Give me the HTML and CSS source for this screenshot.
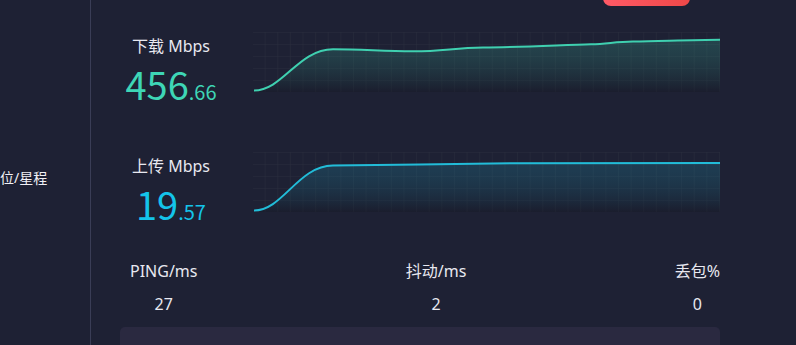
FILE: index.html
```html
<!DOCTYPE html>
<html lang="zh-CN">
  <head>
    <meta charset="UTF-8" />
    <meta name="viewport" content="width=device-width, initial-scale=1.0" />
    <title>测速</title>
    <link rel="stylesheet" href="styles.css">
  </head>
  <body>
    <div class="side">
      <span class="side-label">位/星程</span>
    </div>
    <div class="main">
      <div class="topbar">
        <button class="btn-stop" aria-label="停止"></button>
      </div>

      <div class="speed-row">
        <div class="speed-text">
          <div class="speed-label">下载 Mbps</div>
          <div class="speed-num down">456<small>.66</small></div>
        </div>
        <svg class="chart" width="467" height="60" viewBox="0 0 467 60">
          <defs>
            <pattern id="grid" width="12.62" height="12" patternUnits="userSpaceOnUse">
              <path d="M12.62 0 V12 M0 0 H12.62" fill="none" stroke="#2a2d3d" stroke-width="1" />
            </pattern>
            <linearGradient id="fillDown" x1="0" y1="0" x2="0" y2="1">
              <stop offset="0" stop-color="#3fd0b0" stop-opacity="0.2" />
              <stop offset="1" stop-color="#141622" stop-opacity="0.35" />
            </linearGradient>
            <linearGradient id="fillUp" x1="0" y1="0" x2="0" y2="1">
              <stop offset="0" stop-color="#20b8d8" stop-opacity="0.18" />
              <stop offset="1" stop-color="#141622" stop-opacity="0.35" />
            </linearGradient>
          </defs>
          <rect x="0" y="0" width="467" height="60" fill="url(#grid)" />
          <path d="M1,58.5 C30,58.5 45,17.5 80,17.3 C110,17.3 130,19.3 160,19.3 C190,19.3 200,16 230,15.5 C270,15 310,13 338,12.3 C355,11.8 362,9.8 380,9.5 C410,9 440,7.8 467,7.7 L467,60 L1,60 Z" fill="url(#fillDown)" />
          <path d="M1,58.5 C30,58.5 45,17.5 80,17.3 C110,17.3 130,19.3 160,19.3 C190,19.3 200,16 230,15.5 C270,15 310,13 338,12.3 C355,11.8 362,9.8 380,9.5 C410,9 440,7.8 467,7.7" fill="none" stroke="#3fd0b0" stroke-width="2" />
        </svg>
      </div>

      <div class="speed-row">
        <div class="speed-text">
          <div class="speed-label">上传 Mbps</div>
          <div class="speed-num up">19<small>.57</small></div>
        </div>
        <svg class="chart" width="467" height="60" viewBox="0 0 467 60">
          <rect x="0" y="0" width="467" height="60" fill="url(#grid)" />
          <path d="M1,58.5 C30,58.5 45,13.8 80,13.6 C140,13.2 200,11.6 260,11.3 C330,11 400,10.8 467,11 L467,60 L1,60 Z" fill="url(#fillUp)" />
          <path d="M1,58.5 C30,58.5 45,13.8 80,13.6 C140,13.2 200,11.6 260,11.3 C330,11 400,10.8 467,11" fill="none" stroke="#22bcd8" stroke-width="2" />
        </svg>
      </div>

      <div class="stats">
        <div class="stat">
          <div class="stat-label">PING/ms</div>
          <div class="stat-value">27</div>
        </div>
        <div class="stat">
          <div class="stat-label">抖动/ms</div>
          <div class="stat-value">2</div>
        </div>
        <div class="stat">
          <div class="stat-label">丢包%</div>
          <div class="stat-value">0</div>
        </div>
      </div>

      <div class="card"></div>
    </div>
  </body>
</html>
```

FILE: styles.css
```css
* {
  box-sizing: border-box;
  margin: 0;
  padding: 0;
}
html,
body {
  height: 100%;
  overflow: hidden;
}
body {
  display: flex;
  background: #1e2134;
  color: #e8e8f0;
  font-family: "Noto Sans", "Noto Sans CJK SC", sans-serif;
}
/* left menu column */
.side {
  width: 91px;
  flex: none;
  border-right: 1px solid #3a3d56;
  display: flex;
  align-items: center;
  padding-top: 8px;
}
.side-label {
  font-size: 14px;
  color: #f0f0f5;
  white-space: nowrap;
}
.main {
  width: 600px;
  margin-left: 29px;
}
.topbar {
  height: 32px;
  margin-top: -26px;
  display: flex;
  justify-content: flex-end;
  padding-right: 30px;
}
.btn-stop {
  width: 87px;
  height: 32px;
  border: none;
  border-radius: 8px;
  background: linear-gradient(90deg, #ff5a66, #ee4848);
}
.speed-row {
  display: flex;
  height: 60px;
  margin-top: 26px;
}
.speed-row + .speed-row {
  margin-top: 60px;
}
.speed-text {
  width: 102px;
  text-align: center;
}
.speed-label {
  font-size: 16px;
  line-height: 24px;
  margin-top: 2px;
}
.speed-num {
  font-family: "Noto Sans CJK SC", sans-serif;
  font-size: 38px;
  line-height: 44px;
  margin-top: 4px;
  font-weight: 400;
}
.speed-num small {
  font-size: 20px;
}
.speed-num.down {
  color: #3ed6b6;
}
.speed-num.up {
  color: #14c4ea;
}
.chart {
  display: block;
  margin-left: 31px;
}
.stats {
  display: flex;
  justify-content: space-between;
  padding-left: 10px;
  margin-top: 49px;
}
.stat {
  text-align: center;
}
.stat-label {
  font-size: 16px;
  line-height: 20px;
}
.stat-value {
  font-size: 16px;
  line-height: 20px;
  margin-top: 13px;
}
.card {
  height: 26px;
  margin-top: 13px;
  background: #2a2940;
  border-radius: 5px 5px 0 0;
}
```
